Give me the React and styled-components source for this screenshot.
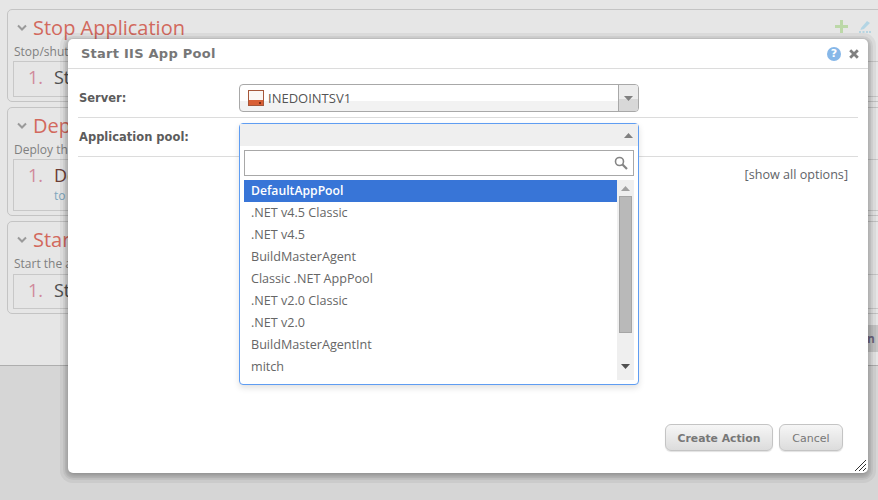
import React from 'react';
import styled, { createGlobalStyle } from 'styled-components';

const Global = createGlobalStyle`
  html, body { margin: 0; padding: 0; height: 100%; overflow: hidden; background: #d6d6d6; }
  #root { width: 878px; height: 500px; overflow: hidden; position: relative; }
`;

const Page = styled.div`
  width: 878px;
  height: 500px;
  overflow: hidden;
  position: relative;
  font-family: "Open Sans", sans-serif;
`;

const Backdrop = styled.div`
  height: 366px;
  box-sizing: border-box;
  background: #e6e6e6;
  border-bottom: 1px solid #aeaeae;
  padding: 9px 0 0 7px;
`;

const Card = styled.section`
  width: 960px;
  height: ${(p) => p.$height}px;
  box-sizing: border-box;
  border: 1px solid #c4c4c4;
  border-radius: 5px;
  margin-bottom: 5px;
  padding: 0 5px;
  position: relative;
`;

const CardHead = styled.div`
  display: flex;
  align-items: center;
  height: 35px;
  gap: 6px;
  padding-left: 4px;
`;

const CardTitle = styled.h2`
  margin: 0;
  font-size: 20px;
  font-weight: 400;
  color: #d2695d;
  line-height: 36px;
`;

const CardText = styled.p`
  margin: 0 0 0 1px;
  height: 14px;
  font-size: 12px;
  line-height: 14px;
  color: #808080;
  white-space: nowrap;
`;

const Step = styled.div`
  height: ${(p) => p.$height}px;
  box-sizing: border-box;
  margin-top: ${(p) => p.$top}px;
  border: 1px solid #c8c8c8;
  padding: 2px 0 0 14px;
  display: grid;
  grid-template-columns: 26px 1fr;
  align-content: start;
`;

const StepNumber = styled.span`
  font-size: 18px;
  line-height: 26px;
  color: #d08a9c;
`;

const StepName = styled.span`
  font-size: 18px;
  line-height: 26px;
  color: ${(p) => p.$color || '#505050'};
`;

const StepNote = styled.span`
  grid-column: 2;
  font-size: 12px;
  line-height: 16px;
  color: #7fa6bd;
`;

const CardTools = styled.div`
  position: absolute;
  top: 10px;
  left: 827px;
  display: flex;
  gap: 11px;
`;

const BackRow = styled.div`
  display: flex;
  justify-content: flex-end;
  padding-top: 6px;
`;

const BackButton = styled.div`
  height: 27px;
  width: 30px;
  box-sizing: border-box;
  background: #c6c6c6;
  color: #6d6680;
  font-size: 12px;
  font-weight: 700;
  line-height: 27px;
  text-align: right;
  padding-right: 3px;
`;

const Dialog = styled.div`
  position: absolute;
  left: 68px;
  top: 39px;
  width: 800px;
  height: 434px;
  background: #fff;
  border-radius: 5px;
  display: flex;
  flex-direction: column;
  box-shadow:
    0 2px 4px 0 rgba(0, 0, 0, 0.22),
    0 2px 0 3px rgba(0, 0, 0, 0.05),
    0 2px 0 5px rgba(0, 0, 0, 0.05),
    0 2px 0 8px rgba(0, 0, 0, 0.05);
`;

const DialogHead = styled.header`
  height: 30px;
  flex: none;
  box-sizing: border-box;
  border-bottom: 1px solid #dcdcdc;
  display: flex;
  align-items: center;
  padding: 0 9px 0 13px;
`;

const DialogTitle = styled.h1`
  margin: 0;
  flex: 1;
  font-family: "DejaVu Sans", sans-serif;
  font-size: 13px;
  letter-spacing: 0.25px;
  font-weight: 700;
  color: #777;
`;

const HelpIcon = styled.span`
  width: 14px;
  height: 14px;
  border-radius: 50%;
  background: #86b7e8;
  color: #fff;
  font-family: "DejaVu Sans", sans-serif;
  font-size: 11px;
  font-weight: 700;
  line-height: 14px;
  text-align: center;
  margin-right: 8px;
`;

const DialogBody = styled.div`
  flex: 1;
  padding: 0 10px;
  position: relative;
`;

const FormRow = styled.div`
  display: flex;
  align-items: ${(p) => (p.$open ? 'flex-start' : 'center')};
  height: ${(p) => p.$height}px;
  box-sizing: border-box;
  padding-top: ${(p) => p.$pad || 0}px;
  border-bottom: 1px solid #dcdcdc;
`;

const Label = styled.label`
  width: 161px;
  flex: none;
  padding-left: 1px;
  box-sizing: border-box;
  font-family: "DejaVu Sans", sans-serif;
  font-size: 11.5px;
  font-weight: 700;
  color: #5c5c5c;
  line-height: 26px;
`;

const Select = styled.div`
  width: 400px;
  height: 28px;
  box-sizing: border-box;
  border: 1px solid #a8a8a8;
  border-radius: 4px;
  background: linear-gradient(#fff 0, #fff 16px, #f2f2f2 16px, #f2f2f2 100%);
  display: flex;
  align-items: center;
  padding-left: 8px;
  gap: 4px;
  overflow: hidden;
`;

const SelectValue = styled.span`
  flex: 1;
  font-size: 13px;
  color: #555;
`;

const SelectArrow = styled.span`
  width: 19px;
  height: 100%;
  flex: none;
  border-left: 1px solid #a8a8a8;
  background: linear-gradient(#ececec, #ececec 55%, #d8d8d8 55%, #d8d8d8);
  display: flex;
  align-items: center;
  justify-content: center;
`;

const Popup = styled.div`
  position: absolute;
  left: 171px;
  top: 54px;
  width: 400px;
  height: 262px;
  box-sizing: border-box;
  background: #fff;
  border: 1px solid #5f9df2;
  border-radius: 4px;
  box-shadow: 0 3px 6px rgba(0, 0, 0, 0.12);
`;

const PopupHead = styled.div`
  height: 22px;
  background: #efefef;
  display: flex;
  justify-content: flex-end;
  align-items: center;
  padding-right: 5px;
`;

const SearchBox = styled.div`
  height: 26px;
  box-sizing: border-box;
  margin: 4px 4px 4px;
  border: 1px solid #a8a8a8;
  display: flex;
  align-items: center;
  justify-content: flex-end;
  padding-right: 5px;
`;

const ListArea = styled.div`
  display: flex;
  height: 200px;
  margin: 0 4px;
`;

const Options = styled.ul`
  flex: 1;
  margin: 0;
  padding: 0;
  list-style: none;
`;

const Option = styled.li`
  height: 22px;
  line-height: 21px;
  padding-left: 7px;
  font-size: ${(p) => (p.$active ? 12.2 : 12.6)}px;
  font-weight: ${(p) => (p.$active ? 600 : 400)};
  background: ${(p) => (p.$active ? '#3875d7' : 'transparent')};
  color: ${(p) => (p.$active ? '#fff' : '#666')};
`;

const ScrollTrack = styled.div`
  width: 17px;
  flex: none;
  background: #efefef;
  display: flex;
  flex-direction: column;
  align-items: center;
  padding-top: 6px;
  box-sizing: border-box;
`;

const ScrollThumb = styled.div`
  width: 13px;
  height: 137px;
  box-sizing: border-box;
  margin: 5px 0 31px;
  background: #b9b9b9;
  border: 1px solid #a5a5a5;
`;

const ShowAll = styled.div`
  padding: 9px 10px 0 0;
  text-align: right;
  font-size: 12.6px;
  line-height: 18px;
  color: #5f6368;
`;

const DialogFoot = styled.footer`
  flex: none;
  height: 49px;
  display: flex;
  justify-content: flex-end;
  gap: 6px;
  padding-right: 25px;
  position: relative;
`;

const FootButton = styled.button`
  width: ${(p) => p.$width}px;
  height: 27px;
  padding: 1px 0 0;
  border: 1px solid #c4c4c4;
  border-radius: 6px;
  background: linear-gradient(#f6f6f6, #dcdcdc);
  box-shadow: 0 1px 1px rgba(0, 0, 0, 0.12);
  font-family: "DejaVu Sans", sans-serif;
  font-size: ${(p) => (p.$primary ? 10.8 : 11)}px;
  font-weight: ${(p) => (p.$primary ? 700 : 400)};
  color: #777;
`;

const ResizeGrip = styled.svg`
  position: absolute;
  right: 2px;
  bottom: 2px;
`;

const Chevron = () => (
  <svg width="10" height="8" viewBox="0 0 10 8">
    <path d="M1 1.5 5 5.5 9 1.5" fill="none" stroke="#9a9a9a" strokeWidth="2" />
  </svg>
);

const Triangle = ({ up, color = '#808080' }) => (
  <svg width="9" height="5" viewBox="0 0 9 5">
    <path d={up ? 'M4.5 0 9 5H0Z' : 'M0 0H9L4.5 5Z'} fill={color} />
  </svg>
);

const sections = [
  { title: 'Stop Application', text: 'Stop/shut', step: 'St', height: 93, boxHeight: 36, top: 2 },
  { title: 'Deploy', text: 'Deploy th', step: 'De', color: '#6b3d35', note: 'to', height: 109, boxHeight: 52, top: 2 },
  { title: 'Start', text: 'Start the a', step: 'St', height: 93, boxHeight: 35, top: 3 },
];

const pools = [
  'DefaultAppPool',
  '.NET v4.5 Classic',
  '.NET v4.5',
  'BuildMasterAgent',
  'Classic .NET AppPool',
  '.NET v2.0 Classic',
  '.NET v2.0',
  'BuildMasterAgentInt',
  'mitch',
];

export default function App() {
  return (
    <Page>
      <Global />
      <Backdrop>
        {sections.map((s, i) => (
          <Card key={i} $height={s.height}>
            <CardHead>
              <Chevron />
              <CardTitle>{s.title}</CardTitle>
            </CardHead>
            <CardText>{s.text}</CardText>
            <Step $height={s.boxHeight} $top={s.top}>
              <StepNumber>1.</StepNumber>
              <StepName $color={s.color}>{s.step}</StepName>
              {s.note && <StepNote>{s.note}</StepNote>}
            </Step>
            {i === 0 && (
              <CardTools>
                <svg width="13" height="13" viewBox="0 0 13 13">
                  <path d="M5 0H8V5H13V8H8V13H5V8H0V5H5Z" fill="#bcd8a8" />
                </svg>
                <svg width="12" height="13" viewBox="0 0 12 13">
                  <path d="M2 8 8 1 11 3 5 9 1.5 10Z" fill="#b4d5e4" />
                  <path d="M0 12H2M3.5 12H5.5M7 12H9M10 12H12" stroke="#a8cfe0" strokeWidth="1.4" />
                </svg>
              </CardTools>
            )}
          </Card>
        ))}
        <BackRow>
          <BackButton>n</BackButton>
        </BackRow>
      </Backdrop>

      <Dialog>
        <DialogHead>
          <DialogTitle>Start IIS App Pool</DialogTitle>
          <HelpIcon>?</HelpIcon>
          <svg width="10" height="10" viewBox="0 0 10 10">
            <path d="M1.2 1.2 8.8 8.8M8.8 1.2 1.2 8.8" stroke="#808080" strokeWidth="2.8" />
          </svg>
        </DialogHead>
        <DialogBody>
          <FormRow $height={49} $pad={10}>
            <Label>Server:</Label>
            <Select>
              <svg width="16" height="16" viewBox="0 0 16 16">
                <rect x="0.5" y="0.5" width="15" height="15" fill="#fbf7f4" stroke="#a5573a" />
                <rect x="1" y="10" width="14" height="5" fill="#d85f35" />
                <rect x="11" y="12" width="2" height="2" fill="#7a2f18" />
              </svg>
              <SelectValue>INEDOINTSV1</SelectValue>
              <SelectArrow>
                <Triangle />
              </SelectArrow>
            </Select>
          </FormRow>
          <FormRow $height={39} $open $pad={6}>
            <Label>Application pool:</Label>
          </FormRow>
          <Popup>
            <PopupHead>
              <Triangle up />
            </PopupHead>
            <SearchBox>
              <svg width="14" height="14" viewBox="0 0 14 14">
                <circle cx="5.5" cy="5.5" r="4" fill="none" stroke="#858585" strokeWidth="1.6" />
                <path d="M8.5 8.5 13 13" stroke="#858585" strokeWidth="2.2" />
              </svg>
            </SearchBox>
            <ListArea>
              <Options>
                {pools.map((p, i) => (
                  <Option key={p} $active={i === 0}>{p}</Option>
                ))}
              </Options>
              <ScrollTrack>
                <Triangle up color="#a0a0a0" />
                <ScrollThumb />
                <Triangle color="#505050" />
              </ScrollTrack>
            </ListArea>
          </Popup>
          <ShowAll>[show all options]</ShowAll>
        </DialogBody>
        <DialogFoot>
          <FootButton $primary $width={108}>Create Action</FootButton>
          <FootButton $width={64}>Cancel</FootButton>
          <ResizeGrip width="11" height="11" viewBox="0 0 11 11">
            <path d="M0 11 11 0M4 11 11 4M8 11 11 8" stroke="#333" strokeWidth="1" />
          </ResizeGrip>
        </DialogFoot>
      </Dialog>
    </Page>
  );
}
